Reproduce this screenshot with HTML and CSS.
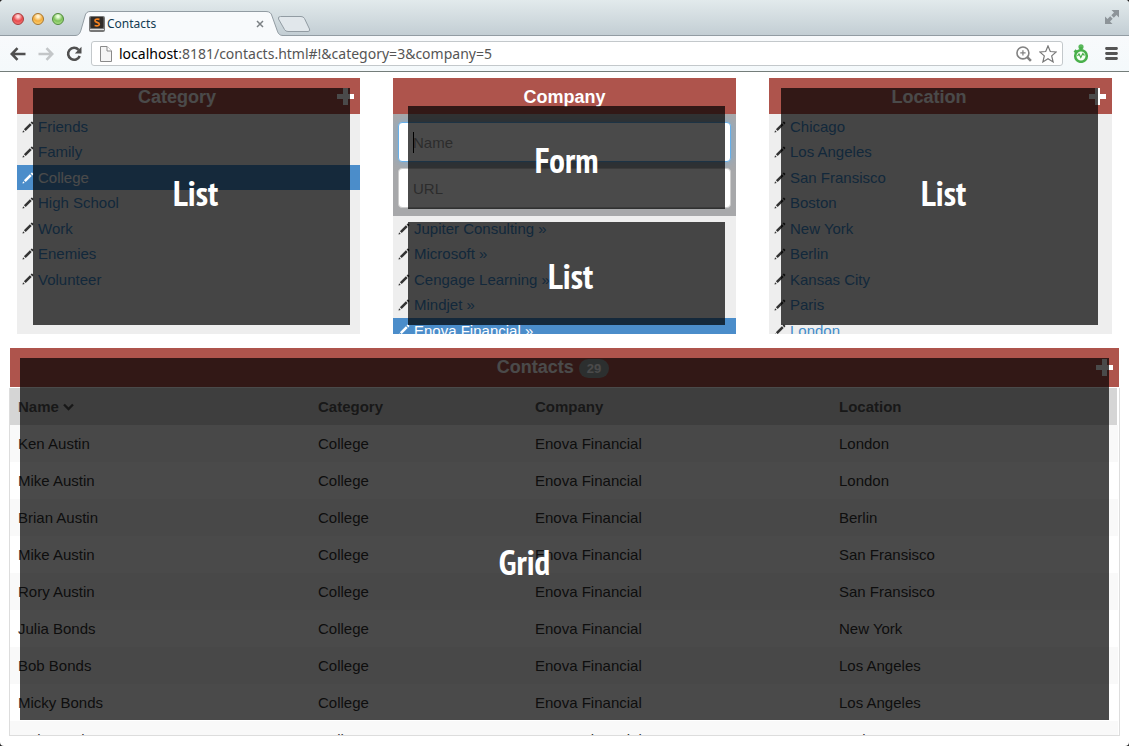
FILE: index.html
```html
<!DOCTYPE html>
<html lang="en">
<head>
<meta charset="utf-8">
<title>Contacts</title>
<link rel="stylesheet" href="styles.css">
</head>
<body>
<svg class="defs" width="0" height="0" aria-hidden="true">
  <symbol id="pencil" viewBox="0 0 12 12"><path d="M.5 11.500 1.100 9.300 2.700 10.900z" fill="currentColor"/><path d="M1.900 8.300 7.900 2.300 9.700 4.100 3.700 10.100z" fill="currentColor"/><path d="M8.600 1.600 9.400.8Q10 .3 10.600.9L11.100 1.400Q11.700 2 11.200 2.600L10.400 3.400z" fill="currentColor"/></symbol>
  <symbol id="plus" viewBox="0 0 17 17"><path d="M6 0h5v6h6v5h-6v6H6v-6H0V6h6z" fill="currentColor"/></symbol>
</svg>
<div class="window">
  <header class="tabstrip">
    <div class="lights"><button class="light red" aria-label="Close"></button><button class="light amber" aria-label="Minimize"></button><button class="light green" aria-label="Zoom"></button></div>
    <div class="tab">
      <svg class="tab-shape" width="208" height="25" viewBox="0 0 208 25"><path d="M0 24.500C4 24.500 5 22 6 19L10 5Q11 .5 15 .5H191Q196 .5 197 5L202 19C203 22 204 24.500 208 24.500V25H0z" fill="#f8fafc"/><path d="M0 24.500C4 24.500 5 22 6 19L10 5Q11 .5 15 .5H191Q196 .5 197 5L202 19C203 22 204 24.500 208 24.500" fill="none" stroke="#929ca3"/></svg>
      <svg class="favicon" width="16" height="16" viewBox="0 0 16 16"><rect width="16" height="16" rx="2" fill="#777"/><rect x="1.500" y="1" width="13" height="11" rx="1" fill="#302c29"/><path d="M1 13.500h14" stroke="#ddd"/><path d="M10.500 3.300Q6 2.500 6 4.800C6 6.800 10.300 6 10.300 8.300Q10 10.500 5.600 9.500" fill="none" stroke="#f58220" stroke-width="1.700"/></svg>
      <span class="tab-title">Contacts</span>
      <button class="tab-close" aria-label="Close tab"><svg width="8" height="8" viewBox="0 0 8 8"><path d="M1 1l6 6M7 1L1 7" stroke="#7b8084" stroke-width="1.500"/></svg></button>
    </div>
    <button class="new-tab" aria-label="New tab"><svg width="34" height="17" viewBox="0 0 34 17"><path d="M3.500.5H24Q26.500.5 27.500 2.500L32.500 13Q33.500 15.500 31 15.500H11Q8.500 15.500 7.500 13.500L1.500 3Q.8.5 3.500.5z" fill="#e1e7eb" stroke="#929ca3"/></svg></button>
    <button class="expand" aria-label="Full screen"><svg width="14" height="14" viewBox="0 0 14 14"><path d="M6.500 0H14V7.500L11.500 5 8.800 7.700 6.300 5.200 9 2.500zM0 6.500 2.500 9 5.200 6.300 7.700 8.800 5 11.500 7.500 14H0z" fill="#8d9499"/></svg></button>
  </header>
  <nav class="toolbar">
    <button aria-label="Back"><svg width="16" height="14" viewBox="0 0 16 14"><path d="M7.500 1.200 1.800 7l5.700 5.800M2 7h13.500" fill="none" stroke="#505050" stroke-width="2.600"/></svg></button>
    <button aria-label="Forward"><svg width="16" height="14" viewBox="0 0 16 14"><path d="M8.500 1.200 14.200 7l-5.700 5.800M14 7H.5" fill="none" stroke="#c3c6c8" stroke-width="2.600"/></svg></button>
    <button aria-label="Reload"><svg width="16" height="16" viewBox="0 0 16 16"><path d="M12.600 3.800A6 6 0 1 0 13.700 10" fill="none" stroke="#505050" stroke-width="2.600"/><path d="M15.500.8v6.700H8.800z" fill="#505050"/></svg></button>
    <div class="omnibox">
      <svg width="12" height="16" viewBox="0 0 12 16"><path d="M.5.5h6.500l4.500 4.500v10.500H.5z" fill="#f5f5f5" stroke="#8a8a8a"/><path d="M7 .5V5h4.500" fill="#fff" stroke="#8a8a8a"/></svg>
      <span class="url"><span class="host">localhost</span>:8181/contacts.html#!&amp;category=3&amp;company=5</span>
      <svg width="16" height="16" viewBox="0 0 15 15"><circle cx="6.500" cy="6.500" r="5.600" fill="none" stroke="#828282" stroke-width="1.500"/><path d="M6.500 4v5M4 6.500h5" stroke="#828282" stroke-width="1.200"/><path d="M10.500 10.500 14 14" stroke="#828282" stroke-width="2.400"/></svg>
      <svg width="18" height="18" viewBox="0 0 18 18"><path d="M9 .9 11.300 6.500 17.200 7 12.700 10.900 14.100 16.900 9 13.700 3.900 16.900 5.300 10.900.8 7 6.700 6.500z" fill="#fff" stroke="#777" stroke-width="1.200"/></svg>
    </div>
    <button class="extension" aria-label="Extension"><svg width="16" height="19" viewBox="0 0 16 19"><circle cx="8" cy="12" r="5.800" fill="#f5fff5" stroke="#49b04b" stroke-width="2.600"/><circle cx="8" cy="2.800" r="2.600" fill="#5ab85c"/><path d="M8 3v4M1.500 6.500l2.500 2" stroke="#49b04b" stroke-width="3"/><path d="M4.500 12l1.500-2 1.800 3.500 2-4 1.700 2" fill="none" stroke="#49b04b" stroke-width="1.200"/></svg></button>
    <button class="menu" aria-label="Menu"><svg width="13" height="13" viewBox="0 0 13 13"><path d="M1.500 1.500h10M1.500 6.500h10M1.500 11.500h10" stroke="#555" stroke-width="2.800" stroke-linecap="round"/></svg></button>
  </nav>

  <main class="page">
    <div class="panels">
      <section class="panel">
        <div class="panel-head"><h2>Category</h2><button class="add" aria-label="Add category"><svg><use href="#plus"/></svg></button></div>
        <ul class="list">
          <li><button aria-label="Edit"><svg><use href="#pencil"/></svg></button><a href="#">Friends</a></li>
          <li><button aria-label="Edit"><svg><use href="#pencil"/></svg></button><a href="#">Family</a></li>
          <li class="selected"><button aria-label="Edit"><svg><use href="#pencil"/></svg></button><a href="#">College</a></li>
          <li><button aria-label="Edit"><svg><use href="#pencil"/></svg></button><a href="#">High School</a></li>
          <li><button aria-label="Edit"><svg><use href="#pencil"/></svg></button><a href="#">Work</a></li>
          <li><button aria-label="Edit"><svg><use href="#pencil"/></svg></button><a href="#">Enemies</a></li>
          <li><button aria-label="Edit"><svg><use href="#pencil"/></svg></button><a href="#">Volunteer</a></li>
        </ul>
        <div class="overlay over-category">List</div>
      </section>

      <section class="panel">
        <div class="panel-head"><h2>Company</h2></div>
        <form class="company-form">
          <label class="field focused"><input type="text" placeholder="Name" aria-label="Name"></label>
          <label class="field"><input type="text" placeholder="URL" aria-label="URL"></label>
        </form>
        <ul class="list">
          <li><button aria-label="Edit"><svg><use href="#pencil"/></svg></button><a href="#">Jupiter Consulting »</a></li>
          <li><button aria-label="Edit"><svg><use href="#pencil"/></svg></button><a href="#">Microsoft »</a></li>
          <li><button aria-label="Edit"><svg><use href="#pencil"/></svg></button><a href="#">Cengage Learning »</a></li>
          <li><button aria-label="Edit"><svg><use href="#pencil"/></svg></button><a href="#">Mindjet »</a></li>
          <li class="selected"><button aria-label="Edit"><svg><use href="#pencil"/></svg></button><a href="#">Enova Financial »</a></li>
        </ul>
        <div class="overlay over-form">Form</div>
        <div class="overlay over-company">List</div>
      </section>

      <section class="panel">
        <div class="panel-head"><h2>Location</h2><button class="add" aria-label="Add location"><svg><use href="#plus"/></svg></button></div>
        <ul class="list">
          <li><button aria-label="Edit"><svg><use href="#pencil"/></svg></button><a href="#">Chicago</a></li>
          <li><button aria-label="Edit"><svg><use href="#pencil"/></svg></button><a href="#">Los Angeles</a></li>
          <li><button aria-label="Edit"><svg><use href="#pencil"/></svg></button><a href="#">San Fransisco</a></li>
          <li><button aria-label="Edit"><svg><use href="#pencil"/></svg></button><a href="#">Boston</a></li>
          <li><button aria-label="Edit"><svg><use href="#pencil"/></svg></button><a href="#">New York</a></li>
          <li><button aria-label="Edit"><svg><use href="#pencil"/></svg></button><a href="#">Berlin</a></li>
          <li><button aria-label="Edit"><svg><use href="#pencil"/></svg></button><a href="#">Kansas City</a></li>
          <li><button aria-label="Edit"><svg><use href="#pencil"/></svg></button><a href="#">Paris</a></li>
          <li><button aria-label="Edit"><svg><use href="#pencil"/></svg></button><a href="#">London</a></li>
        </ul>
        <div class="overlay over-location">List</div>
      </section>
    </div>

    <section class="contacts">
      <div class="panel-head contacts-head"><h2>Contacts <span class="badge">29</span></h2><button class="add" aria-label="Add contact"><svg><use href="#plus"/></svg></button></div>
      <div class="table-wrap">
        <table>
          <colgroup><col class="c-name"><col class="c-category"><col class="c-company"><col></colgroup>
          <thead><tr><th>Name <svg width="11" height="8" viewBox="0 0 11 8"><path d="M1 1.500l4.500 4.500L10 1.500" fill="none" stroke="#555" stroke-width="2.400"/></svg></th><th>Category</th><th>Company</th><th>Location</th></tr></thead>
          <tbody>
            <tr><td>Ken Austin</td><td>College</td><td>Enova Financial</td><td>London</td></tr>
            <tr><td>Mike Austin</td><td>College</td><td>Enova Financial</td><td>London</td></tr>
            <tr><td>Brian Austin</td><td>College</td><td>Enova Financial</td><td>Berlin</td></tr>
            <tr><td>Mike Austin</td><td>College</td><td>Enova Financial</td><td>San Fransisco</td></tr>
            <tr><td>Rory Austin</td><td>College</td><td>Enova Financial</td><td>San Fransisco</td></tr>
            <tr><td>Julia Bonds</td><td>College</td><td>Enova Financial</td><td>New York</td></tr>
            <tr><td>Bob Bonds</td><td>College</td><td>Enova Financial</td><td>Los Angeles</td></tr>
            <tr><td>Micky Bonds</td><td>College</td><td>Enova Financial</td><td>Los Angeles</td></tr>
            <tr><td>Rob Bonds</td><td>College</td><td>Enova Financial</td><td>Paris</td></tr>
          </tbody>
        </table>
      </div>
      <div class="overlay over-grid">Grid</div>
    </section>
  </main>
</div>
</body>
</html>
```
FILE: styles.css
```css
* { box-sizing: border-box; }
html { background: #222; }
body {
  margin: 0;
  font-family: "Liberation Sans", Arial, sans-serif;
  font-size: 15px;
  color: #333;
}
button { padding: 0; border: 0; background: none; color: inherit; display: flex; }
svg { display: block; flex: none; }
.defs { position: absolute; }
.window {
  height: 100vh;
  display: flex;
  flex-direction: column;
  background: #fff;
  border-radius: 4px;
  overflow: hidden;
}

/* Browser chrome */
.tabstrip {
  flex: none;
  height: 36px;
  display: flex;
  align-items: flex-start;
  padding: 0 10px 0 12px;
  background: linear-gradient(#e2eaec, #c3ced4);
  border-bottom: 1px solid #929ca3;
}
.lights { display: flex; gap: 8px; padding-top: 13px; width: 63px; }
.light { width: 12px; height: 12px; border-radius: 50%; border: 1px solid; }
.red { background: radial-gradient(circle at 50% 25%, #ffd5d5 10%, #e8494c 50%, #f58b88); border-color: #a83a3a; }
.amber { background: radial-gradient(circle at 50% 25%, #fff2cf 10%, #f3ac3c 50%, #ffe08a); border-color: #a8752c; }
.green { background: radial-gradient(circle at 50% 25%, #e9ffd9 10%, #7cc05a 50%, #c3ef9c); border-color: #4f8a3c; }
.tab {
  position: relative;
  width: 202px;
  height: 25px;
  margin-top: 11px;
  padding: 0 13px 0 14px;
  display: flex;
  align-items: center;
  gap: 2px;
}
.tab-shape { position: absolute; left: 0; top: 0; }
.favicon, .tab-title, .tab-close { position: relative; }
.tab-title { flex: 1; font: 12px "Noto Sans", sans-serif; color: #123a52; }
.new-tab { margin-top: 16px; }
.expand { margin: 10px 0 0 auto; }
.toolbar {
  flex: none;
  height: 36px;
  display: flex;
  align-items: center;
  gap: 12px;
  padding: 0 11px 0 10px;
  background: linear-gradient(#f8fafc, #f4f9fb);
  border-bottom: 1px solid #747d7a;
}
.omnibox {
  flex: 1;
  height: 25px;
  margin-left: -3px;
  padding: 0 5px 0 8px;
  display: flex;
  align-items: center;
  gap: 7px;
  background: #fff;
  border: 1px solid #c3c8cb;
  border-radius: 3px;
}
.url { flex: 1; font: 14px "Noto Sans", sans-serif; color: #555; }
.host { color: #000; }
.extension { margin-left: -2px; }
.menu { margin-left: 4px; }

/* Page */
.page { flex: 1; min-height: 0; display: flex; flex-direction: column; gap: 14px; padding: 6px 9px 10px; }
.panels { flex: none; display: grid; grid-template-columns: repeat(3, 1fr); gap: 33px; padding: 0 8px; }
.panel {
  position: relative;
  height: 256px;
  display: flex;
  flex-direction: column;
  background: #eee;
  overflow: hidden;
}
.panel-head {
  flex: none;
  height: 36px;
  display: flex;
  align-items: center;
  padding-right: 6px;
  background: #ae544c;
  color: #fff;
}
.panel-head h2 { flex: 1; margin: 0; padding-top: 2px; font-size: 18px; line-height: 20px; text-align: center; }
.panel-head h2:last-child { padding-left: 6px; }
.add svg { width: 17px; height: 17px; }
.company-form {
  flex: none;
  display: flex;
  flex-direction: column;
  gap: 6px;
  padding: 8px 5px;
  background: #a7a8aa;
}
.field { position: relative; display: block; }
.field input {
  display: block;
  width: 100%;
  height: 40px;
  padding: 0 14px;
  border: 1px solid #ccc;
  border-radius: 4px;
  background: #fff;
  font: inherit;
}
.field input::placeholder { color: #999; opacity: 1; }
.focused input { border-color: #66afe9; box-shadow: 0 0 8px rgba(102, 175, 233, .6); }
.focused::after {
  content: "";
  position: absolute;
  left: 15px;
  top: 10px;
  width: 1px;
  height: 21px;
  background: #000;
}
.list { margin: 0; padding: 0; list-style: none; line-height: 1.430; }
.list li { display: flex; align-items: center; gap: 4px; padding: 2px 5px; }
.list button svg { width: 12px; height: 12px; }
.list a { color: #428bca; text-decoration: none; }
.list .selected { background: #4b8dca; color: #fff; }
.list .selected a { color: #fff; }

.contacts { position: relative; flex: 1; min-height: 0; display: flex; flex-direction: column; gap: 1px; }
.contacts-head { height: 39px; margin: 0 1px; }
.contacts-head h2 { padding-top: 0; }
.badge {
  display: inline-block;
  padding: 0 8px;
  border-radius: 10px;
  background: #98a2a3;
  font-size: 13px;
  line-height: 19px;
  vertical-align: middle;
}
.table-wrap { flex: 1; min-height: 0; overflow: hidden; border: 1px solid #ddd; border-top: 0; padding-right: 1px; }
table { width: 100%; table-layout: fixed; border-spacing: 0; }
.c-name { width: 300px; }
.c-category { width: 217px; }
.c-company { width: 304px; }
th, td { height: 37px; padding: 0 8px; text-align: left; }
th { background: #d5d5d5; color: #555; }
th:last-child { border-right: 1px solid #fff; }
th svg { display: inline-block; vertical-align: 1px; }
tbody tr:nth-child(odd) { background: #f9f9f9; }

/* Annotation overlays */
.overlay {
  position: absolute;
  display: flex;
  align-items: center;
  justify-content: center;
  background: rgba(0, 0, 0, .71);
  color: #fff;
  font: bold 35px/40px "PT Sans Narrow", "Open Sans Condensed", "Roboto Condensed", "Liberation Sans Narrow", "Open Sans", sans-serif;
}
.over-category { inset: 10px 10px 9px 16px; padding: 0 0 28px 8px; }
.over-form { inset: 28px 11px 125px 15px; padding-top: 4px; }
.over-company { inset: 144px 11px 9px 15px; padding: 4px 0 0 8px; }
.over-location { inset: 10px 14px 9px 12px; padding: 0 0 28px 8px; }
.over-grid { inset: 10px 11px 16px 11px; padding: 46px 80px 0 0; }
```
